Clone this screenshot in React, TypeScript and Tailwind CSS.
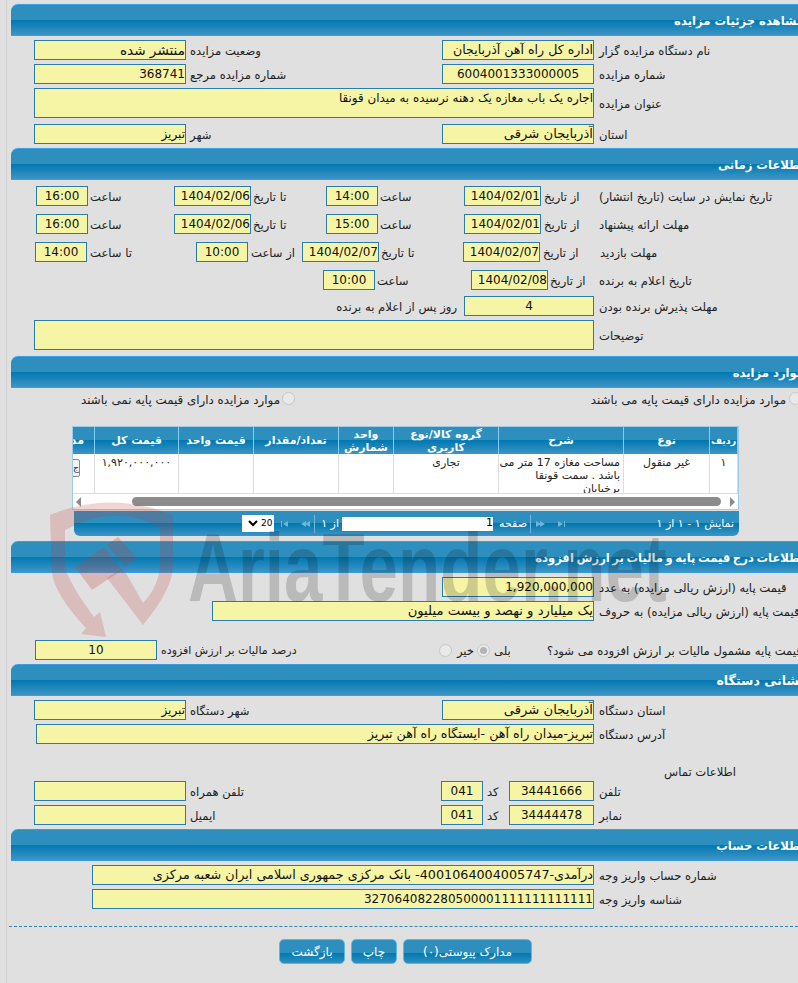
import React from "react";

const grad = "bg-[linear-gradient(to_bottom,#2e8fbf_0%,#2e8fbf_50%,#0078b0_50%,#3d95c6_100%)]";
const btn = "bg-[linear-gradient(to_bottom,#2e8fbf_0%,#2e8fbf_55%,#0078b0_55%,#2e8fbf_100%)]";

function F({ c = "", children }: { c?: string; children?: React.ReactNode }) {
  return (
    <div dir="rtl" className={`h-5 shrink-0 border border-[#2a7cae] bg-[#f6f5a6] text-[#111] leading-[18px] whitespace-nowrap overflow-hidden ${c}`}>
      {children}
    </div>
  );
}
function L({ c = "", children }: { c?: string; children?: React.ReactNode }) {
  return (
    <div dir="rtl" className={`h-5 shrink-0 text-left text-[#222] whitespace-nowrap leading-[22px] ${c.includes("text-[") ? "" : "text-[11.6px]"} ${c}`}>
      {children}
    </div>
  );
}
function Row({ c = "", children }: { c?: string; children: React.ReactNode }) {
  return <div className={`flex items-center ${c}`}>{children}</div>;
}
function Head({ c = "", children }: { c?: string; children: React.ReactNode }) {
  return (
    <div dir="rtl" className={`ml-[4px] h-8 w-[793px] shrink-0 rounded-tl-[7px] border-y border-[#3a9be0] ${grad} text-white font-bold leading-[32px] whitespace-nowrap ${c.includes("text-[") ? "" : "text-[11.6px]"} ${c}`}>
      {children}
    </div>
  );
}
function Radio({ on = false, c = "" }: { on?: boolean; c?: string }) {
  return (
    <span className={`flex h-[13px] w-[13px] shrink-0 items-center justify-center rounded-full border border-[#c8c8c8] bg-[#e9e9e9] ${c}`}>
      {on && <span className="h-[7px] w-[7px] rounded-full bg-[#b4b4b4]" />}
    </span>
  );
}
function Th({ c = "", children }: { c?: string; children?: React.ReactNode }) {
  return (
    <div dir="rtl" className={`flex h-full shrink-0 items-center justify-center border-r border-[#7fcdf0] text-center font-bold leading-[13px] text-white ${c.includes("text-[") ? "" : "text-[11px]"} ${c}`}>
      {children}
    </div>
  );
}
function Td({ c = "", children }: { c?: string; children?: React.ReactNode }) {
  return (
    <div dir="rtl" className={`h-full shrink-0 overflow-hidden border-r border-[#dddddd] pt-[2px] text-center text-[11px] leading-[13px] text-[#222] ${c.includes("pr-") ? "" : "px-[3px]"} ${c}`}>
      {children}
    </div>
  );
}
function Tri({ dir, bar = false, dbl = false }: { dir: "l" | "r"; bar?: boolean; dbl?: boolean }) {
  return (
    <svg width="12" height="8" viewBox="0 0 12 8" className="shrink-0" fill="#6fb6da">
      <g transform={dir === "l" ? "" : "translate(12,0) scale(-1,1)"}>
        {bar && <rect x="1" y="1" width="1" height="6" />}
        <path d="M3 4 L8 1 V7 Z" />
        {dbl && <path d="M7 4 L12 1 V7 Z" />}
      </g>
    </svg>
  );
}

export default function App() {
  return (
    <div className="relative h-[983px] w-[798px] overflow-hidden bg-[#e0e0e0] font-['DejaVu_Sans',sans-serif] text-[12px]">
      <div className="ml-[6px] h-full w-[792px] border-l border-[#cfcfcf] pt-[4px]">
        <Head>مشاهده جزئیات مزایده</Head>
        <Row c="mt-1">
          <F c="ml-[27px] w-[152px] text-[13.6px]">منتشر شده</F>
          <L c="w-[256px] pl-[4px]">وضعیت مزایده</L>
          <F c="w-[152px] text-[12.6px]">اداره کل راه آهن آذربایجان</F>
          <L c="pl-[5px]">نام دستگاه مزایده گزار</L>
        </Row>
        <Row c="mt-1">
          <F c="ml-[27px] w-[152px]">368741</F>
          <L c="w-[256px] pl-[4px]">شماره مزایده مرجع</L>
          <F c="w-[152px] text-center">6004001333000005</F>
          <L c="pl-[5px]">شماره مزایده</L>
        </Row>
        <Row c="mt-1">
          <F c="ml-[27px] h-[30px] w-[560px] text-[11.9px]">اجاره یک باب مغازه یک دهنه نرسیده به میدان قونقا</F>
          <L c="pl-[5px]">عنوان مزایده</L>
        </Row>
        <Row c="mt-[6px]">
          <F c="ml-[27px] w-[152px]">تبریز</F>
          <L c="w-[256px] pl-[4px]">شهر</L>
          <F c="w-[152px] text-[13.2px]">آذربایجان شرقی</F>
          <L c="pl-[5px]">استان</L>
        </Row>

        <Head c="mt-1">اطلاعات زمانی</Head>
        <Row c="mt-[6px]">
          <F c="ml-[29px] w-[52px] text-center">16:00</F>
          <L c="w-[86px] pl-[2px]">ساعت</L>
          <F c="w-[77px]">1404/02/06</F>
          <L c="w-[75px] pl-[2px]">تا تاریخ</L>
          <F c="w-[52px] text-center">14:00</F>
          <L c="w-[86px] pl-[2px]">ساعت</L>
          <F c="w-[77px]">1404/02/01</F>
          <L c="w-[57px] pl-[3px]">از تاریخ</L>
          <L c="pl-[1px]">تاریخ نمایش در سایت (تاریخ انتشار)</L>
        </Row>
        <Row c="mt-2">
          <F c="ml-[29px] w-[52px] text-center">16:00</F>
          <L c="w-[86px] pl-[2px]">ساعت</L>
          <F c="w-[77px]">1404/02/06</F>
          <L c="w-[75px] pl-[2px]">تا تاریخ</L>
          <F c="w-[52px] text-center">15:00</F>
          <L c="w-[86px] pl-[2px]">ساعت</L>
          <F c="w-[77px]">1404/02/01</F>
          <L c="w-[57px] pl-[3px]">از تاریخ</L>
          <L c="pl-[1px]">مهلت ارائه پیشنهاد</L>
        </Row>
        <Row c="mt-2">
          <F c="ml-[28px] w-[52px] text-center">14:00</F>
          <L c="w-[109px] pl-[3px]">تا ساعت</L>
          <F c="w-[52px] text-center">10:00</F>
          <L c="w-[54px] pl-[3px]">از ساعت</L>
          <F c="w-[77px]">1404/02/07</F>
          <L c="w-[84px] pl-[2px]">تا تاریخ</L>
          <F c="w-[77px]">1404/02/07</F>
          <L c="w-[58px] pl-[3px]">از تاریخ</L>
          <L c="pl-[2px]">مهلت بازدید</L>
        </Row>
        <Row c="mt-2">
          <F c="ml-[316px] w-[52px] text-center">10:00</F>
          <L c="w-[96px] pl-[2px]">ساعت</L>
          <F c="w-[77px]">1404/02/08</F>
          <L c="w-[50px] pl-[2px]">از تاریخ</L>
          <L c="pl-[1px]">تاریخ اعلام به برنده</L>
        </Row>
        <Row c="mt-[6px]">
          <L c="ml-[316px] w-[134px] text-right">روز پس از اعلام به برنده</L>
          <F c="ml-[7px] w-[130px] text-center">4</F>
          <L c="pl-[5px]">مهلت پذیرش برنده بودن</L>
        </Row>
        <Row c="mt-1">
          <F c="ml-[27px] h-[30px] w-[560px]" />
          <L c="pl-[5px]">توضیحات</L>
        </Row>

        <Head c="mt-[6px]">موارد مزایده</Head>
        <Row c="mt-1 h-[13px]">
          <L c="ml-[74px] w-[201px] pr-[2px] text-right text-[11.85px]">موارد مزایده دارای قیمت پایه نمی باشند</L>
          <Radio />
          <L c="w-[494px] pr-[3px] text-right text-[11.85px]">موارد مزایده دارای قیمت پایه می باشند</L>
          <Radio />
        </Row>

        <div className="ml-[65px] mt-[21px] w-[667px] border-x border-t border-[#9ccbe6] bg-white">
          <div className={`flex h-[27px] ${grad}`}>
            <Th c="w-[21px] justify-start overflow-hidden whitespace-nowrap border-r-0 pr-[10px]">مدارک</Th>
            <Th c="w-[85px] border-l border-[#7fcdf0]">قیمت کل</Th>
            <Th c="w-[75px]">قیمت واحد</Th>
            <Th c="w-[85px]">تعداد/مقدار</Th>
            <Th c="w-[55px]">واحد شمارش</Th>
            <Th c="w-[105px]">گروه کالا/نوع کاربری</Th>
            <Th c="w-[125px]">شرح</Th>
            <Th c="w-[86px]">نوع</Th>
            <Th c="w-[28px] text-[9.5px]">ردیف</Th>
          </div>
          <div className="flex h-[40px] border-b border-[#dddddd]">
            <Td c="relative w-[21px] border-r-0 px-0">
              <span className="absolute -left-[1px] top-[5px] flex h-[18px] w-[8px] items-center justify-end overflow-hidden rounded-r-[2px] border border-[#888] bg-[#f2f2f2] text-[9px]">ج</span>
            </Td>
            <Td c="w-[85px] border-l border-[#dddddd]">۱,۹۲۰,۰۰۰,۰۰۰</Td>
            <Td c="w-[75px]" />
            <Td c="w-[85px]" />
            <Td c="w-[55px]" />
            <Td c="w-[105px]">تجاری</Td>
            <Td c="w-[125px] pr-[3px] text-right text-[10.7px]">مساحت مغازه 17 متر می باشد . سمت قونقا برخیابان</Td>
            <Td c="w-[86px]">غیر منقول</Td>
            <Td c="w-[28px]">۱</Td>
          </div>
          <div className="flex h-[15px] items-center">
            <svg width="8" height="10" viewBox="0 0 8 10" className="ml-[2px] shrink-0" fill="#8c8c8c"><path d="M1 5 L6 0 V10 Z" /></svg>
            <div className="ml-[49px] h-[9px] w-[589px] shrink-0 rounded-full bg-[#8c8c8c]" />
            <svg width="8" height="10" viewBox="0 0 8 10" className="ml-[7px] shrink-0" fill="#8c8c8c"><path d="M7 5 L2 0 V10 Z" /></svg>
          </div>
          <div className="h-[1px] bg-[#a5d3ec]" />
        </div>
        <div className={`relative ml-[67px] mt-[1px] h-[25px] w-[665px] rounded-b-[6px] ${grad}`}>
          <div className="flex h-full items-center text-[11px] text-white">
            <div className="ml-[168px] flex h-[17px] w-[32px] shrink-0 items-center bg-white text-[9px] text-black">
              <svg width="10" height="7" viewBox="0 0 10 7" className="ml-[6px] shrink-0" fill="none" stroke="#000" strokeWidth="2"><path d="M1 1 L5 5 L9 1" /></svg>
              <span className="ml-[3px] leading-none">20</span>
            </div>
            <div className="ml-[6px]"><Tri dir="l" bar /></div>
            <div className="ml-[6px]"><Tri dir="l" dbl /></div>
            <div className="ml-[4px] h-[18px] w-[1px] shrink-0 bg-[#6fb6da]" />
            <span dir="rtl" className="ml-[4px] w-[20px] shrink-0 whitespace-nowrap leading-none">از ۱</span>
            <input readOnly value="1" dir="rtl" className="ml-[3px] h-[14px] w-[151px] shrink-0 bg-white text-[11px] text-black outline-none" />
            <span dir="rtl" className="ml-[4px] w-[30px] shrink-0 whitespace-nowrap leading-none">صفحه</span>
            <div className="ml-[3px] h-[18px] w-[1px] shrink-0 bg-[#6fb6da]" />
            <div className="ml-[5px]"><Tri dir="r" dbl /></div>
            <div className="ml-[6px]"><Tri dir="r" bar /></div>
            <span dir="rtl" className="ml-auto mr-[5px] shrink-0 whitespace-nowrap leading-none">نمایش ۱ - ۱ از ۱</span>
          </div>
        </div>

        <Head c="mt-[5px] [word-spacing:-1.5px]">اطلاعات درج قیمت پایه و مالیات بر ارزش افزوده</Head>
        <Row c="mt-1">
          <F c="ml-[435px] w-[152px]">1,920,000,000</F>
          <L c="pl-[5px]">قیمت پایه (ارزش ریالی مزایده) به عدد</L>
        </Row>
        <Row c="mt-1">
          <F c="ml-[205px] w-[382px] text-[13.2px]">یک میلیارد و نهصد و بیست میلیون</F>
          <L c="pl-[5px]">قیمت پایه (ارزش ریالی مزایده) به حروف</L>
        </Row>
        <Row c="mt-[19px]">
          <F c="ml-[28px] w-[122px] text-center">10</F>
          <L c="w-[282px] pl-[4px] text-[11px]">درصد مالیات بر ارزش افزوده</L>
          <Radio />
          <L c="w-[25px] pr-[3px] text-right">خیر</L>
          <Radio on />
          <L c="w-[57px] pl-[4px]">بلی</L>
          <L>قیمت پایه مشمول مالیات بر ارزش افزوده می شود؟</L>
        </Row>

        <Head c="mt-1 text-[12.6px]">نشانی دستگاه</Head>
        <Row c="mt-1">
          <F c="ml-[27px] w-[152px]">تبریز</F>
          <L c="w-[256px] pl-[4px]">شهر دستگاه</L>
          <F c="w-[152px] text-[13.2px]">آذربایجان شرقی</F>
          <L c="pl-[5px]">استان دستگاه</L>
        </Row>
        <Row c="mt-1">
          <F c="ml-[29px] w-[558px] text-[12.7px]">تبریز-میدان راه آهن -ایستگاه راه آهن تبریز</F>
          <L c="pl-[5px]">آدرس دستگاه</L>
        </Row>
        <Row c="mt-[19px] h-4">
          <L c="ml-[657px]">اطلاعات تماس</L>
        </Row>
        <Row c="mt-[2px]">
          <F c="ml-[27px] w-[152px]" />
          <L c="w-[255px] pl-[4px]">تلفن همراه</L>
          <F c="w-[42px] text-center">041</F>
          <L c="w-[26px] pl-[4px]">کد</L>
          <F c="w-[85px] text-center">34441666</F>
          <L c="pl-[5px]">تلفن</L>
        </Row>
        <Row c="mt-1">
          <F c="ml-[27px] w-[152px]" />
          <L c="w-[255px] pl-[4px]">ایمیل</L>
          <F c="w-[42px] text-center">041</F>
          <L c="w-[26px] pl-[4px]">کد</L>
          <F c="w-[85px] text-center">34444478</F>
          <L c="pl-[5px]">نمابر</L>
        </Row>

        <Head c="mt-1">اطلاعات حساب</Head>
        <Row c="mt-1">
          <F c="ml-[85px] w-[502px] text-[12.75px]">درآمدی-4001064004005747- بانک مرکزی جمهوری اسلامی ایران شعبه مرکزی</F>
          <L c="pl-[5px]">شماره حساب واریز وجه</L>
        </Row>
        <Row c="mt-1">
          <F c="ml-[85px] w-[502px]">327064082280500001111111111111</F>
          <L c="pl-[5px]">شناسه واریز وجه</L>
        </Row>
        <div className="ml-[2px] mt-[17px] border-t border-dashed border-[#2a85b8]" />
        <div className="ml-[272px] mt-[12px] flex gap-[6px] text-white">
          <button className={`h-[25px] w-[66px] rounded-[5px] border border-[#5bb8e0] ${btn} leading-none`}>بازگشت</button>
          <button className={`h-[25px] w-[46px] rounded-[5px] border border-[#5bb8e0] ${btn} leading-none`}>چاپ</button>
          <button dir="rtl" className={`h-[25px] w-[129px] rounded-[5px] border border-[#5bb8e0] ${btn} leading-none`}>مدارک پیوستی(۰)</button>
        </div>
      </div>

      <div className="pointer-events-none absolute inset-0">
        <svg width="798" height="983" viewBox="0 0 798 983" className="absolute left-0 top-0">
          <path
            fill="rgb(190,60,60)"
            fillOpacity="0.22"
            d="M50 515 Q110 490 173 515 L173 567 Q172 590 143 625 L107 578 L123 568 L143 603 Q160 585 160 563 L160 527 Q113 503 65 530 L65 567 Q70 585 94 617 L100 612 L106 637 L81 634 L86 628 Q55 595 52 573 Z"
          />
          <path fill="rgb(190,60,60)" fillOpacity="0.26" d="M75 567 L104 547 L122 570 L92 590 Z M107 545 L118 537 L137 558 L125 567 Z" />
        </svg>
        <div className="absolute left-[188px] top-[520px] origin-left whitespace-nowrap font-['Liberation_Sans',sans-serif] text-[96px] font-bold leading-none text-black/[0.17] [transform:scaleX(0.72)]">
          AriaTender.net
        </div>
      </div>
    </div>
  );
}
